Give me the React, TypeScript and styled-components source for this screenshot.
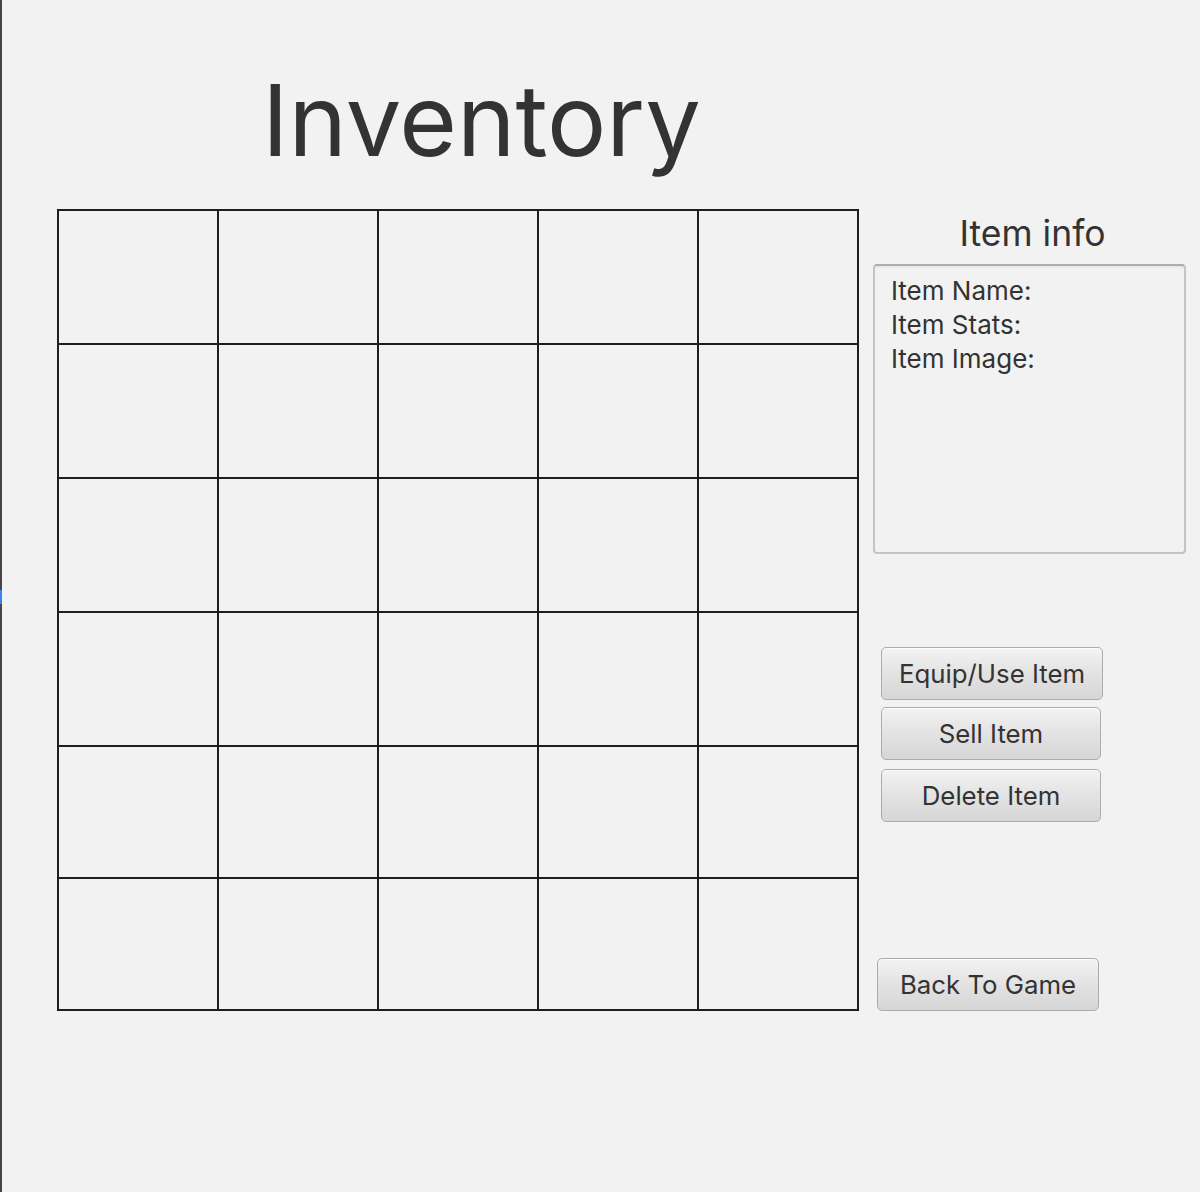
import React from "react";
import styled, { createGlobalStyle } from "styled-components";

const GlobalStyle = createGlobalStyle`
  html, body {
    margin: 0;
    padding: 0;
    background: #f2f2f2;
  }
  body {
    font-family: Inter, "Noto Sans", "Liberation Sans", sans-serif;
    color: #333333;
  }
`;

const Page = styled.div`
  display: flex;
  width: 1200px;
  height: 1192px;
  background: #f2f2f2;
  overflow: hidden;
`;

const EdgeStripe = styled.div`
  width: 2px;
  flex: 0 0 2px;
  background: #474747;
  display: flex;
  flex-direction: column;
  padding-top: 590px;
  box-sizing: border-box;
`;

const EdgeMarker = styled.div`
  width: 2px;
  height: 14px;
  background: #3b82f0;
`;

const Main = styled.div`
  flex: 1;
  display: flex;
  flex-direction: column;
  padding-left: 55px;
`;

const Title = styled.h1`
  margin: 71px 0 40px 205px;
  font-family: Inter, "Noto Sans", "Liberation Sans", sans-serif;
  font-weight: 400;
  font-size: 99px;
  line-height: 98px;
  height: 98px;
  color: #333333;
  letter-spacing: 0;
`;

const Body = styled.div`
  display: flex;
  align-items: flex-start;
`;

const Grid = styled.div`
  display: grid;
  grid-template-columns: repeat(5, 158px);
  grid-template-rows: 132px 132px 132px 132px 130px 130px;
  gap: 2px;
  padding: 2px;
  background: #1e1e1e;
`;

const Cell = styled.div`
  background: #f2f2f2;
`;

const Sidebar = styled.div`
  display: flex;
  flex-direction: column;
  width: 313px;
  margin-left: 14px;
`;

const InfoTitle = styled.div`
  margin-top: 5px;
  text-align: center;
  font-size: 35.5px;
  line-height: 40px;
  height: 40px;
  color: #333333;
  padding-left: 6px;
`;

const InfoBox = styled.div`
  margin-top: 10px;
  height: 290px;
  box-sizing: border-box;
  border: 2px solid #c4c4c4;
  border-top-color: #acacac;
  border-radius: 4px;
  background: #f2f2f2;
  box-shadow: inset 0 3px 3px -2px rgba(0, 0, 0, 0.08);
  padding: 8px 16px;
  display: flex;
  flex-direction: column;
`;

const InfoLine = styled.div`
  font-size: 26px;
  line-height: 34px;
  color: #333333;
`;

const ActionButton = styled.button<{ $top: number; $left: number; $width: number }>`
  margin-top: ${(p) => p.$top}px;
  margin-left: ${(p) => p.$left}px;
  width: ${(p) => p.$width}px;
  height: 53px;
  box-sizing: border-box;
  border: 1.5px solid #acacac;
  border-radius: 5px;
  background: linear-gradient(to bottom, #f3f3f3 0%, #e4e4e4 45%, #d6d6d6 100%);
  box-shadow: inset 0 1px 0 rgba(255, 255, 255, 0.7);
  font-family: Inter, "Noto Sans", "Liberation Sans", sans-serif;
  font-size: 25.8px;
  color: #333333;
  display: flex;
  align-items: center;
  justify-content: center;
  padding: 0;
  cursor: default;
`;

const rowCount = 6;
const colCount = 5;

export default function App() {
  const cells = Array.from({ length: rowCount * colCount }, (_, i) => i);
  return (
    <>
      <GlobalStyle />
      <Page>
        <EdgeStripe>
          <EdgeMarker />
        </EdgeStripe>
        <Main>
          <Title>Inventory</Title>
          <Body>
            <Grid>
              {cells.map((i) => (
                <Cell key={i} />
              ))}
            </Grid>
            <Sidebar>
              <InfoTitle>Item info</InfoTitle>
              <InfoBox>
                <InfoLine>Item Name:</InfoLine>
                <InfoLine>Item Stats:</InfoLine>
                <InfoLine>Item Image:</InfoLine>
              </InfoBox>
              <ActionButton $top={93} $left={8} $width={222}>
                Equip/Use Item
              </ActionButton>
              <ActionButton $top={7} $left={8} $width={220}>
                Sell Item
              </ActionButton>
              <ActionButton $top={9} $left={8} $width={220}>
                Delete Item
              </ActionButton>
              <ActionButton $top={136} $left={4} $width={222}>
                Back To Game
              </ActionButton>
            </Sidebar>
          </Body>
        </Main>
      </Page>
    </>
  );
}
